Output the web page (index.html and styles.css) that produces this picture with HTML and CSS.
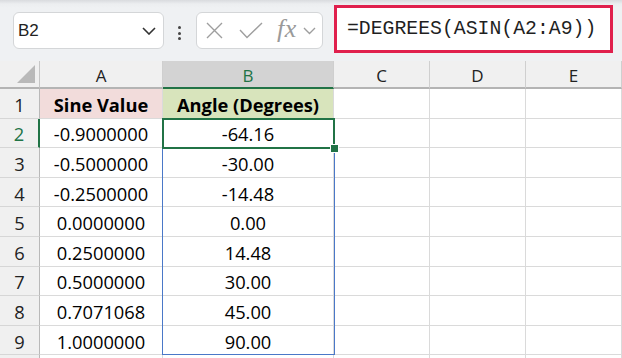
FILE: index.html
```html
<!DOCTYPE html>
<html>
<head>
<meta charset="utf-8">
<link rel="stylesheet" href="styles.css">
</head>
<body>
<div class="topbar">
  <div class="namebox">
    <span class="nb-text">B2</span>
    <svg class="nb-chev" width="14" height="8" viewBox="0 0 14 8"><path d="M1 1 L7 7 L13 1" fill="none" stroke="#333" stroke-width="1.6"/></svg>
  </div>
  <div class="dots"><i></i><i></i><i></i></div>
  <div class="fnbox">
    <svg class="ic-x" width="17" height="17" viewBox="0 0 17 17"><path d="M1 1 L16 16 M16 1 L1 16" stroke="#9e9e9e" stroke-width="1.4" fill="none"/></svg>
    <svg class="ic-check" width="24" height="17" viewBox="0 0 24 17"><path d="M1 8 L8 15.5 L23 1" stroke="#9e9e9e" stroke-width="1.4" fill="none"/></svg>
    <span class="fx">fx</span>
    <svg class="ic-chev" width="13" height="8" viewBox="0 0 13 8"><path d="M1 1 L6.5 6.5 L12 1" fill="none" stroke="#9e9e9e" stroke-width="1.4"/></svg>
  </div>
  <div class="formula">=DEGREES(ASIN(A2:A9))</div>
</div>
<div class="sheetwrap">
  <div class="sheet">
    <div class="corner"><span class="tri"></span></div>
    <div class="ch">A</div>
    <div class="ch sel">B</div>
    <div class="ch">C</div>
    <div class="ch">D</div>
    <div class="ch">E</div>

    <div class="rh">1</div><div class="c pink b">Sine Value</div><div class="c green b">Angle (Degrees)</div><div class="c"></div><div class="c"></div><div class="c"></div>
    <div class="rh sel">2</div><div class="c">-0.9000000</div><div class="c">-64.16</div><div class="c"></div><div class="c"></div><div class="c"></div>
    <div class="rh">3</div><div class="c">-0.5000000</div><div class="c">-30.00</div><div class="c"></div><div class="c"></div><div class="c"></div>
    <div class="rh">4</div><div class="c">-0.2500000</div><div class="c">-14.48</div><div class="c"></div><div class="c"></div><div class="c"></div>
    <div class="rh">5</div><div class="c">0.0000000</div><div class="c">0.00</div><div class="c"></div><div class="c"></div><div class="c"></div>
    <div class="rh">6</div><div class="c">0.2500000</div><div class="c">14.48</div><div class="c"></div><div class="c"></div><div class="c"></div>
    <div class="rh">7</div><div class="c">0.5000000</div><div class="c">30.00</div><div class="c"></div><div class="c"></div><div class="c"></div>
    <div class="rh">8</div><div class="c">0.7071068</div><div class="c">45.00</div><div class="c"></div><div class="c"></div><div class="c"></div>
    <div class="rh">9</div><div class="c">1.0000000</div><div class="c">90.00</div><div class="c"></div><div class="c"></div><div class="c"></div>
    <div class="rh"></div><div class="c"></div><div class="c"></div><div class="c"></div><div class="c"></div><div class="c"></div>
  </div>
  <div class="sheet overlay">
    <div class="spill"></div>
    <div class="active"><span class="handle"></span></div>
  </div>
</div>
</body>
</html>
```

FILE: styles.css
```css
html, body {
  margin: 0;
  padding: 0;
  background: #ffffff;
  overflow: hidden;
}
body {
  width: 622px;
  height: 358px;
  font-family: "Open Sans", "Liberation Sans", sans-serif;
}
.topbar {
  height: 61px;
  box-sizing: border-box;
  display: flex;
  align-items: flex-start;
  background: linear-gradient(#d9dbde 0px, #eceef0 4px, #eff1f3 8px);
}
.namebox {
  margin-top: 12px;
  margin-left: 13px;
  width: 151px;
  height: 37px;
  box-sizing: border-box;
  background: #fff;
  border: 1px solid #d4d6d8;
  border-radius: 6px;
  display: flex;
  align-items: center;
  padding-left: 4px;
  padding-right: 7px;
}
.nb-text {
  font-family: "Liberation Sans", sans-serif;
  font-size: 17px;
  color: #222;
  flex: 1;
}
.dots {
  margin-top: 26px;
  margin-left: 14px;
  width: 4px;
  display: flex;
  flex-direction: column;
  gap: 2.5px;
}
.dots i {
  display: block;
  width: 3px;
  height: 3px;
  border-radius: 50%;
  background: #444;
}
.fnbox {
  margin-top: 12px;
  margin-left: 14px;
  width: 127px;
  height: 37px;
  box-sizing: border-box;
  background: #fff;
  border: 1px solid #d4d6d8;
  border-radius: 6px;
  display: flex;
  align-items: center;
  padding-left: 9px;
}
.ic-check { margin-left: 16px; }
.fx {
  margin-left: 14px;
  font-family: "Liberation Serif", serif;
  font-style: italic;
  font-size: 26px;
  color: #9a9a9a;
  line-height: 1;
  margin-top: -3px;
  letter-spacing: 0.5px;
}
.ic-chev { margin-left: 6px; }
.formula {
  margin-top: 5px;
  margin-left: 11px;
  width: 279px;
  height: 48px;
  box-sizing: border-box;
  background: #fff;
  border: 3px solid #e0204d;
  display: flex;
  align-items: center;
  padding-left: 10px;
  font-family: "Liberation Mono", monospace;
  font-size: 19.8px;
  color: #1f1f1f;
}
.sheetwrap {
  position: relative;
}
.sheet {
  display: grid;
  grid-template-columns: 40px 123px 171px 96px 96px 96px;
  grid-template-rows: 28px repeat(10, 29.6px);
  font-size: 18.3px;
  color: #000;
}
.overlay {
  position: absolute;
  inset: 0;
  pointer-events: none;
}
.corner {
  background: #f0f0f0;
  border-right: 1px solid #c6c6c6;
  border-bottom: 2px solid #b4b4b4;
  box-sizing: border-box;
  display: flex;
  align-items: flex-end;
  justify-content: flex-end;
  padding: 0 4px 4px 0;
}
.tri {
  width: 0;
  height: 0;
  border-left: 18px solid transparent;
  border-bottom: 18px solid #b9b9b9;
}
.ch {
  background: #f0f0f0;
  border-right: 1px solid #cfcfcf;
  border-bottom: 2px solid #b4b4b4;
  box-sizing: border-box;
  display: flex;
  align-items: center;
  justify-content: center;
  font-size: 17px;
  color: #222;
  padding-top: 2px;
}
.ch.sel {
  background: #d3d3d3;
  color: #217346;
  border-bottom-color: #217346;
}
.rh {
  background: #f0f0f0;
  border-right: 1px solid #b9b9b9;
  border-bottom: 1px solid #d6d6d6;
  box-sizing: border-box;
  display: flex;
  align-items: center;
  justify-content: center;
  color: #222;
  padding-top: 2px;
}
.rh.sel {
  color: #217346;
  border-right: 2px solid #217346;
}
.c {
  border-right: 1px solid #dadada;
  border-bottom: 1px solid #dadada;
  box-sizing: border-box;
  display: flex;
  align-items: center;
  justify-content: center;
  white-space: nowrap;
  padding-top: 2px;
}
.c.b { font-weight: 700; }
.c.pink { background: #f2dcdb; }
.c.green { background: #d8e4bc; }
.spill {
  grid-column: 3;
  grid-row: 3 / 11;
  border: 1.5px solid #4a78c8;
  margin: 0 -0.5px 0 -1px;
}
.active {
  grid-column: 3;
  grid-row: 3;
  border: 2px solid #217346;
  margin: -1px -1px -1px -1px;
  position: relative;
}
.handle {
  position: absolute;
  right: -6px;
  bottom: -6px;
  width: 7px;
  height: 7px;
  background: #217346;
  border: 1px solid #fff;
}
```
